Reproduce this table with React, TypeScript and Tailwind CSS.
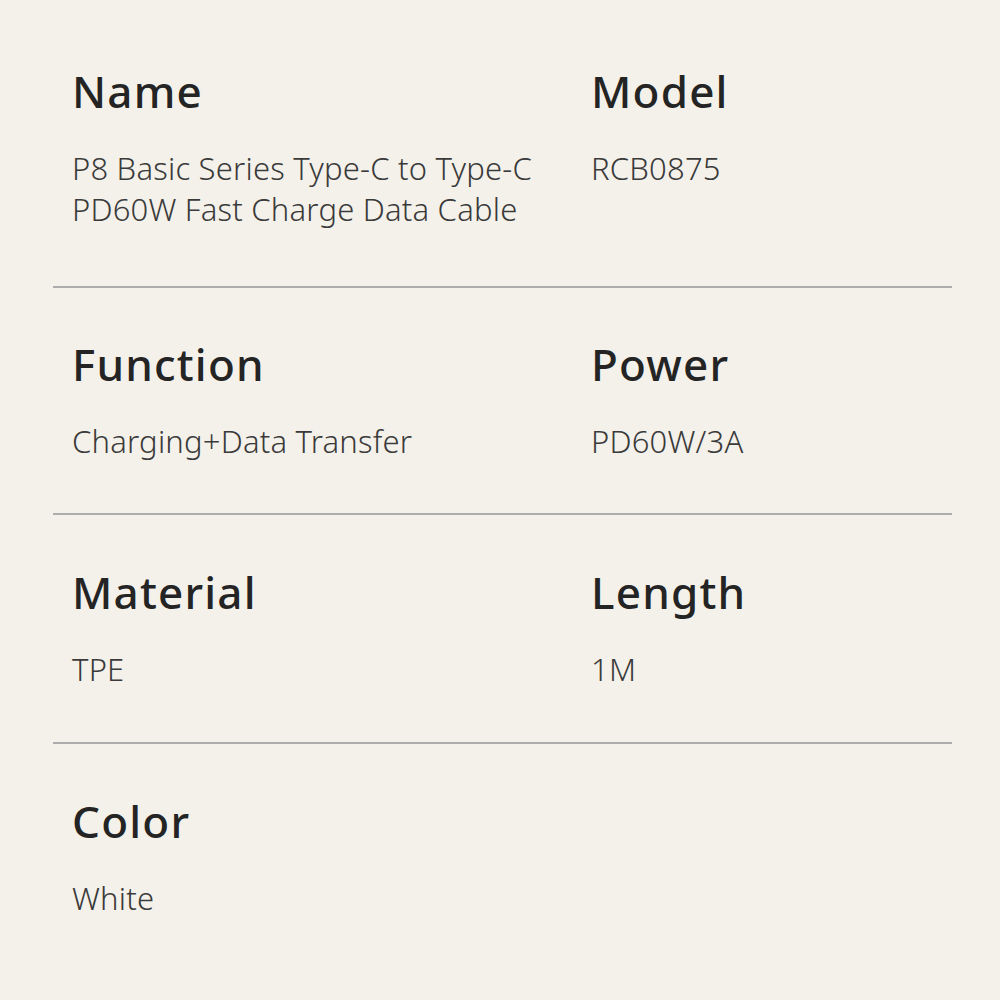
import React from "react";

type Row = { items: { label: string; value: string[] }[]; pt: string; pb: string; divider: boolean };

const rows: Row[] = [
  {
    items: [
      { label: "Name", value: ["P8 Basic Series Type-C to Type-C", "PD60W Fast Charge Data Cable"] },
      { label: "Model", value: ["RCB0875"] },
    ],
    pt: "pt-[69px]",
    pb: "pb-[56px]",
    divider: true,
  },
  {
    items: [
      { label: "Function", value: ["Charging+Data Transfer"] },
      { label: "Power", value: ["PD60W/3A"] },
    ],
    pt: "pt-[54px]",
    pb: "pb-[51px]",
    divider: true,
  },
  {
    items: [
      { label: "Material", value: ["TPE"] },
      { label: "Length", value: ["1M"] },
    ],
    pt: "pt-[55px]",
    pb: "pb-[52px]",
    divider: true,
  },
  {
    items: [{ label: "Color", value: ["White"] }],
    pt: "pt-[55px]",
    pb: "pb-[60px]",
    divider: false,
  },
];

export default function App() {
  return (
    <div
      className="w-[1000px] h-[1000px] bg-[#f4f1ea] pl-[53px] pr-[48px] overflow-hidden"
      style={{ fontFamily: '"Noto Sans", "Open Sans", sans-serif' }}
    >
      {rows.map((row, i) => (
        <div key={i} className={row.divider ? "border-b-2 border-[#adadad]" : ""}>
          <div className={`grid grid-cols-[519px_1fr] ${row.pt} ${row.pb}`}>
            {row.items.map((it) => (
              <div key={it.label} className="pl-[19px] flex flex-col gap-[35px]">
                <div className="text-[44px] leading-[44px] font-medium text-[#242424] tracking-[1.2px]">
                  {it.label}
                </div>
                <div className="text-[31px] leading-[41px] font-light text-[#3a3a3a] tracking-[0.2px]">
                  {it.value.map((v) => (
                    <div key={v}>{v}</div>
                  ))}
                </div>
              </div>
            ))}
          </div>
        </div>
      ))}
    </div>
  );
}
